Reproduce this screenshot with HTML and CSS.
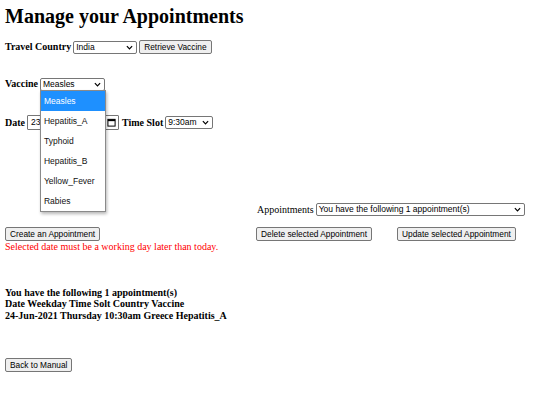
FILE: index.html
```html
<!DOCTYPE html>
<html lang="en">
<head>
<meta charset="utf-8">
<title>Manage your Appointments</title>
<link rel="stylesheet" href="styles.css">
</head>
<body>
<div class="page">
  <h1 class="title">Manage your Appointments</h1>

  <div class="row row-country">
    <b class="label">Travel Country</b>
    <span class="select sel-country"><span class="sel-text">India</span><svg class="chev" viewBox="0 0 8 5" width="7" height="5"><path d="M1 1 L4 4 L7 1" fill="none" stroke="#000" stroke-width="1.4"/></svg></span>
    <button class="btn">Retrieve Vaccine</button>
  </div>

  <div class="row row-vaccine">
    <b class="label">Vaccine</b>
    <span class="select-wrap">
      <span class="select sel-vaccine"><span class="sel-text">Measles</span><svg class="chev" viewBox="0 0 8 5" width="7" height="5"><path d="M1 1 L4 4 L7 1" fill="none" stroke="#000" stroke-width="1.4"/></svg></span>
      <ul class="popup">
        <li class="opt active">Measles</li>
        <li class="opt">Hepatitis_A</li>
        <li class="opt">Typhoid</li>
        <li class="opt">Hepatitis_B</li>
        <li class="opt">Yellow_Fever</li>
        <li class="opt">Rabies</li>
      </ul>
    </span>
  </div>

  <div class="row row-date">
    <b class="label">Date</b>
    <span class="date-input"><span class="sel-text">23</span><svg class="cal" viewBox="0 0 10 10" width="9" height="9"><rect x="1" y="1.5" width="8" height="7.5" fill="none" stroke="#000" stroke-width="1.1"/><rect x="1" y="1.5" width="8" height="2" fill="#000"/></svg></span>
    <b class="label label-slot">Time Slot</b>
    <span class="select sel-slot"><span class="sel-text">9:30am</span><svg class="chev" viewBox="0 0 8 5" width="7" height="5"><path d="M1 1 L4 4 L7 1" fill="none" stroke="#000" stroke-width="1.4"/></svg></span>
  </div>

  <div class="manage">
    <div class="cell-empty"></div>
    <div class="row appt-row">
      <span class="label-plain">Appointments</span>
      <span class="select sel-appt"><span class="sel-text">You have the following 1 appointment(s)</span><svg class="chev" viewBox="0 0 8 5" width="7" height="5"><path d="M1 1 L4 4 L7 1" fill="none" stroke="#000" stroke-width="1.4"/></svg></span>
    </div>
    <div class="left-actions">
      <button class="btn">Create an Appointment</button>
      <p class="error">Selected date must be a working day later than today.</p>
    </div>
    <div class="right-actions">
      <button class="btn">Delete selected Appointment</button>
      <button class="btn">Update selected Appointment</button>
    </div>
  </div>

  <div class="summary">
    <div>You have the following 1 appointment(s)</div>
    <div>Date Weekday Time Solt Country Vaccine</div>
    <div>24-Jun-2021 Thursday 10:30am Greece Hepatitis_A</div>
  </div>

  <div class="back">
    <button class="btn">Back to Manual</button>
  </div>
</div>
</body>
</html>
```

FILE: styles.css
```css
html, body {
  margin: 0;
  padding: 0;
  background: #fff;
}

.page {
  padding: 0 5px;
  font-family: "Liberation Serif", "Times New Roman", serif;
  font-size: 10px;
  line-height: 11.5px;
  color: #000;
}

.title {
  font-size: 20px;
  line-height: 23px;
  font-weight: bold;
  margin: 5px 0 0;
}

.row {
  display: flex;
  align-items: center;
  gap: 2px;
  height: 14px;
}

.row-country { margin-top: 12px; }
.row-vaccine { margin-top: 23px; }
.row-date { margin-top: 24px; height: 15px; }

.label { font-weight: bold; white-space: nowrap; }
.label-slot { margin-left: 1px; }
.label-plain { white-space: nowrap; }

.select,
.date-input {
  box-sizing: border-box;
  display: inline-flex;
  align-items: center;
  justify-content: space-between;
  height: 13px;
  border: 1px solid #767676;
  border-radius: 2px;
  background: #fff;
  font-family: "Liberation Sans", Arial, sans-serif;
  font-size: 8.5px;
  line-height: 11px;
  padding: 0 3px 0 2px;
  white-space: nowrap;
}

.chev { flex: none; }

.sel-country { width: 64px; }
.sel-vaccine { width: 65px; }
.sel-slot { width: 48px; }
.sel-appt { width: 209px; }

.date-input {
  width: 92px;
  height: 15px;
  border-radius: 1px;
  padding: 0 2px 0 3px;
}

.select-wrap {
  position: relative;
  display: inline-flex;
}

.popup {
  position: absolute;
  left: 0;
  top: 12px;
  z-index: 5;
  margin: 0;
  padding: 0;
  list-style: none;
  width: 66px;
  box-sizing: border-box;
  background: #fff;
  border: 1px solid #8a8a8a;
  box-shadow: 1px 2px 3px rgba(0, 0, 0, 0.28);
  font-family: "Liberation Sans", Arial, sans-serif;
  font-size: 8.5px;
}

.opt {
  height: 20px;
  line-height: 20px;
  padding-left: 3px;
  color: #111;
}

.opt.active {
  background: #1e90ff;
  color: #fff;
}

.btn {
  box-sizing: border-box;
  height: 14px;
  margin: 0;
  padding: 0 4px;
  border: 1px solid #767676;
  border-radius: 2px;
  background: #efefef;
  color: #000;
  font-family: "Liberation Sans", Arial, sans-serif;
  font-size: 8.33px;
  line-height: 12px;
  white-space: nowrap;
}

.manage {
  display: grid;
  grid-template-columns: 251px auto;
  margin-top: 73px;
}

.appt-row {
  height: 13px;
  gap: 2px;
  padding-left: 1px;
}

.left-actions {
  padding-top: 11px;
}

.right-actions {
  padding-top: 11px;
  display: flex;
  align-items: flex-start;
  gap: 25px;
}

.left-actions .btn { display: block; }

.error {
  margin: 0;
  color: #ff0000;
  white-space: nowrap;
}

.summary {
  margin-top: 34px;
  font-weight: bold;
}

.back {
  margin-top: 37px;
}
```
